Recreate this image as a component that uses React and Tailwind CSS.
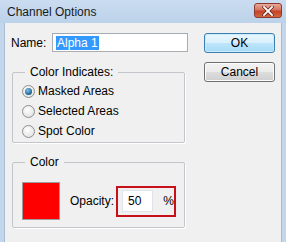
import React from "react";

function Radio({ checked, label }) {
  return (
    <div className="flex items-center h-[20px]">
      <span className="w-[13px] h-[13px] rounded-full border border-[#8e8f8f] bg-[radial-gradient(circle_at_40%_35%,#ffffff,#d9dadc)] flex items-center justify-center ml-[9px] mr-[3px]">
        {checked && (
          <span className="w-[7px] h-[7px] rounded-full bg-[radial-gradient(circle_at_40%_35%,#7fc4ed,#1b5d8a_70%)]" />
        )}
      </span>
      <span>{label}</span>
    </div>
  );
}

function Btn({ children, focus }) {
  return (
    <div
      className={
        "w-[71px] h-[20px] rounded-[3px] border flex items-center justify-center " +
        (focus
          ? "border-[#3c7fb1] bg-[linear-gradient(#eaf6fd,#d9f0fc_50%,#bee6fd_50%,#a7d9f5)] shadow-[inset_0_0_0_1px_#c8eafa]"
          : "border-[#707070] bg-[linear-gradient(#f2f2f2,#ebebeb_50%,#dddddd_50%,#cfcfcf)] shadow-[inset_0_0_0_1px_#fcfcfc]")
      }
    >
      {children}
    </div>
  );
}

export default function App() {
  return (
    <div
      className="w-[286px] h-[242px] overflow-hidden flex flex-col bg-[#c4d6ec] text-[12px] text-black"
      style={{ fontFamily: '"Liberation Sans", Arial, sans-serif' }}
    >
      <div className="h-[23px] flex items-center justify-between pl-[7px] pr-[4px] bg-[linear-gradient(#cadcf0,#bcd2ea)] shrink-0">
        <span className="text-[12px] text-[#1a1a1a] pt-[1px]">Channel Options</span>
        <div className="w-[28px] h-[15px] mt-[-2px] rounded-[3px] border border-[#8a3a30] bg-[linear-gradient(#e9a99a,#d8735c_45%,#c5442a_55%,#d0683f)] flex items-center justify-center">
          <svg width="12" height="10" viewBox="0 0 12 10">
            <path d="M2 1 L10 9 M10 1 L2 9" stroke="#5a1f14" strokeWidth="3.2" strokeLinecap="square" />
            <path d="M2 1 L10 9 M10 1 L2 9" stroke="#ffffff" strokeWidth="1.8" strokeLinecap="square" />
          </svg>
        </div>
      </div>
      <div className="flex-1 mx-[4px] bg-[#f0f0f0] border-l border-r border-[#a8bcd2] flex">
        <div className="w-[185px] pl-[6px] pt-[10px] flex flex-col">
          <div className="flex items-center h-[19px]">
            <span className="w-[41px]">Name:</span>
            <div className="w-[136px] h-[19px] border border-[#abadb3] border-t-[#a3aab4] bg-white flex items-center pl-[3px]">
              <span className="bg-[#3399ff] text-white px-[1px] leading-[14px]">Alpha 1</span>
            </div>
          </div>
          <fieldset className="mt-[13px] ml-[1px] w-[173px] h-[78px] border border-[#c2c6ca] rounded-[2px] shadow-[1px_1px_0_#ffffff] px-0 pb-0">
            <legend className="ml-[12px] px-[5px] leading-[14px]">Color Indicates:</legend>
            <div className="flex flex-col mt-[2px]">
              <Radio checked label="Masked Areas" />
              <Radio label="Selected Areas" />
              <Radio label="Spot Color" />
            </div>
          </fieldset>
          <fieldset className="mt-[12px] ml-[1px] w-[173px] h-[73px] border border-[#c2c6ca] rounded-[2px] shadow-[1px_1px_0_#ffffff] px-0 pb-0">
            <legend className="ml-[12px] px-[5px] leading-[14px]">Color</legend>
            <div className="flex items-center mt-[13px] ml-[9px]">
              <div className="w-[38px] h-[38px] bg-[#ff0000] border border-[#9e9e9e]" />
              <span className="ml-[10px]">Opacity:</span>
              <div className="ml-[2px] w-[60px] h-[31px] border-2 border-[#c8101a] flex items-center pl-[4px]">
                <div className="w-[32px] h-[22px] bg-white border border-[#e2e3ea] flex items-center pl-[5px]">50</div>
                <span className="ml-[10px]">%</span>
              </div>
            </div>
          </fieldset>
        </div>
        <div className="flex flex-col gap-[9px] pt-[10px] pl-[14px]">
          <Btn focus>OK</Btn>
          <Btn>Cancel</Btn>
        </div>
      </div>
    </div>
  );
}
